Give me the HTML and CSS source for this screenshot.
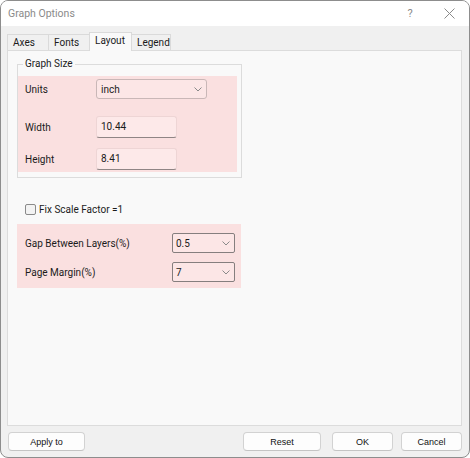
FILE: index.html
```html
<!DOCTYPE html>
<html>
<head>
<meta charset="utf-8">
<link rel="stylesheet" href="styles.css">
</head>
<body>
<div class="window">
  <div class="titlebar">
    <span class="title">Graph Options</span>
    <span class="tb-help">?</span>
    <span class="tb-close"><svg width="11" height="11" viewBox="0 0 11 11"><path d="M0.5 0.5L10.5 10.5M10.5 0.5L0.5 10.5" stroke="#8a8a8a" stroke-width="1" fill="none"/></svg></span>
  </div>
  <div class="body">
    <div class="tabs">
      <div class="tab t-axes">Axes</div>
      <div class="tab t-fonts">Fonts</div>
      <div class="tab t-layout active">Layout</div>
      <div class="tab t-legend">Legend</div>
    </div>
    <div class="panel">
      <fieldset class="group">
        <legend>Graph Size</legend>
        <div class="pink pink-size">
          <div class="row row-units">
            <span class="label">Units</span>
            <div class="combo combo-units"><span>inch</span><svg class="chev" width="8" height="5" viewBox="0 0 8 5"><path d="M0.5 0.5L4 4L7.5 0.5" stroke="#8a8a8a" stroke-width="1" fill="none"/></svg></div>
          </div>
          <div class="row row-width">
            <span class="label">Width</span>
            <div class="textbox">10.44</div>
          </div>
          <div class="row row-height">
            <span class="label">Height</span>
            <div class="textbox">8.41</div>
          </div>
        </div>
      </fieldset>
      <div class="check-row">
        <span class="checkbox"></span>
        <span class="check-label">Fix Scale Factor =1</span>
      </div>
      <div class="pink pink-gap">
        <div class="row row-gap">
          <span class="label2">Gap Between Layers(%)</span>
          <div class="combo combo-small"><span>0.5</span><svg class="chev" width="8" height="5" viewBox="0 0 8 5"><path d="M0.5 0.5L4 4L7.5 0.5" stroke="#8a8a8a" stroke-width="1" fill="none"/></svg></div>
        </div>
        <div class="row row-margin">
          <span class="label2">Page Margin(%)</span>
          <div class="combo combo-small"><span>7</span><svg class="chev" width="8" height="5" viewBox="0 0 8 5"><path d="M0.5 0.5L4 4L7.5 0.5" stroke="#8a8a8a" stroke-width="1" fill="none"/></svg></div>
        </div>
      </div>
    </div>
    <div class="buttons">
      <div class="btn btn-apply">Apply to</div>
      <div class="spacer"></div>
      <div class="btn btn-reset">Reset</div>
      <div class="btn btn-ok">OK</div>
      <div class="btn btn-cancel">Cancel</div>
    </div>
  </div>
</div>
</body>
</html>
```
FILE: styles.css
```css
* { box-sizing: border-box; }
html, body { margin: 0; padding: 0; background: #ffffff; }
body { font-family: Roboto, "Liberation Sans", sans-serif; font-size: 10px; color: #1b1b1b; }

.window {
  width: 470px; height: 458px;
  border: 1px solid #8d8d8d;
  border-radius: 8px;
  overflow: hidden;
  background: #f0f0f0;
  display: flex; flex-direction: column;
}

.titlebar {
  height: 25px; flex: none;
  background: #ffffff;
  display: flex; align-items: center;
  padding-left: 7px;
}
.title { color: #8a8a8a; font-size: 10.5px; flex: 1; }
.tb-help { color: #8a8a8a; font-size: 11px; width: 10px; text-align: center; margin-right: 29px; }
.tb-close { width: 11px; height: 11px; display: flex; margin-right: 14px; }

.body {
  flex: 1;
  display: flex; flex-direction: column;
  padding: 6px 7px 6px 6px;
}

.tabs { display: flex; height: 18px; align-items: flex-end; flex: none; position: relative; z-index: 1; }
.tab {
  height: 16px;
  border: 1px solid #dadada; border-bottom: none;
  background: #f0f0f0;
  padding-left: 5px;
  line-height: 15px;
  margin-right: -1px;
}
.t-axes { width: 42px; }
.t-fonts { width: 42px; }
.t-layout { width: 43px; }
.t-legend { width: 40px; }
.tab.active {
  height: 19px; background: #f9f9f9;
  line-height: 15px;
  margin-bottom: -1px;
  padding-left: 5px;
}

.panel {
  flex: 1;
  border: 1px solid #dcdcdc;
  background: #f9f9f9;
  padding: 5px 0 0 9px;
  display: flex; flex-direction: column;
}

.group {
  margin: 0; padding: 4px 4px 5px 0;
  width: 225px;
  border: 1px solid #dcdcdc;
  min-width: 0;
}
.group legend {
  margin-left: 5px;
  padding: 0 2px;
  font-size: 10px;
  line-height: 16px;
}

.pink { background: #fae0e0; }
.pink-size { padding: 3px 0 3px 7px; height: 96px; }
.row { display: flex; align-items: center; }
.label { width: 71px; }
.label2 { width: 147px; }
.row-width { margin-top: 17px; }
.row-height { margin-top: 10px; }

.combo {
  display: flex; align-items: center; justify-content: space-between;
  background: #fce6e6;
  border: 1px solid #c9b7b7;
  border-radius: 3px;
  padding: 0 4px 0 4px;
  height: 20px;
}
.combo-units { width: 111px; }
.combo-small { width: 63px; border-color: #857e7e; border-radius: 2px; padding-left: 3px; }

.textbox {
  width: 81px; height: 22px;
  background: #fde9e9;
  border: 1px solid #eed5d5;
  border-bottom: 1px solid #8f8585;
  border-radius: 3px;
  padding: 0 4px;
  line-height: 19px;
}

.check-row {
  display: flex; align-items: center;
  margin-top: 25px;
  margin-left: 8px;
  height: 12px;
}
.checkbox {
  width: 11px; height: 11px;
  border: 1px solid #8a8a8a;
  border-radius: 2px;
  background: #f3f3f3;
  margin-right: 3px;
}

.pink-gap {
  margin-top: 9px;
  width: 224px; height: 64px;
  padding: 9px 0 0 8px;
}
.row-margin { margin-top: 9px; }

.buttons {
  flex: none;
  display: flex;
  margin-top: 6px;
  height: 19px;
  font-family: "Liberation Sans", Arial, sans-serif;
  font-size: 9px;
  color: #111;
}
.spacer { flex: 1; }
.btn {
  background: #fdfdfd;
  border: 1px solid #d2d2d2;
  border-bottom-color: #c4c4c4;
  border-radius: 4px;
  display: flex; align-items: center; justify-content: center;
  height: 19px;
}
.btn-apply { width: 77px; margin-left: 1px; }
.btn-reset { width: 78px; margin-right: 11px; }
.btn-ok { width: 61px; margin-right: 8px; }
.btn-cancel { width: 61px; }
```
